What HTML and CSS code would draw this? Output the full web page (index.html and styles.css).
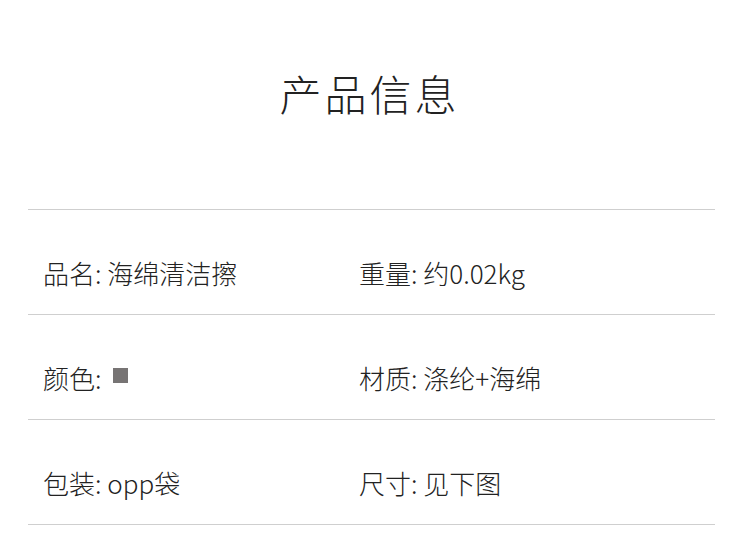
FILE: index.html
```html
<!DOCTYPE html>
<html lang="zh">
<head>
<meta charset="utf-8">
<link rel="stylesheet" href="styles.css">
</head>
<body>
<div class="page">
  <h1 class="title">产品信息</h1>
  <div class="table">
    <div class="row">
      <div class="cell">品名: 海绵清洁擦</div>
      <div class="cell">重量: 约0.02kg</div>
    </div>
    <div class="row">
      <div class="cell">颜色: <span class="swatch"></span></div>
      <div class="cell">材质: 涤纶+海绵</div>
    </div>
    <div class="row">
      <div class="cell">包装: opp袋</div>
      <div class="cell">尺寸: 见下图</div>
    </div>
  </div>
</div>
</body>
</html>
```

FILE: styles.css
```css
html, body {
  margin: 0;
  padding: 0;
  background: #fff;
}
.page {
  width: 750px;
  height: 560px;
  overflow: hidden;
  font-family: "Noto Sans CJK SC", "Noto Sans", sans-serif;
  color: #222;
}
.title {
  margin: 0;
  padding-top: 68px;
  padding-right: 11px;
  height: 209px;
  box-sizing: border-box;
  text-align: center;
  font-size: 42px;
  font-weight: 200;
  line-height: 50px;
  letter-spacing: 3px;
  color: #222;
}
.table {
  margin: 0 35px 0 28px;
  border-top: 1px solid #cfcfcf;
}
.row {
  display: grid;
  grid-template-columns: 316px 1fr;
  height: 104px;
  border-bottom: 1px solid #cfcfcf;
  box-sizing: content-box;
  align-items: end;
  padding-left: 15px;
}
.cell {
  font-size: 26px;
  font-weight: 300;
  line-height: 30px;
  padding-bottom: 26px;
  display: flex;
  align-items: center;
  white-space: pre;
}
.swatch {
  display: inline-block;
  width: 15px;
  height: 15px;
  background: #777474;
  margin-left: 6px;
  margin-top: -5px;
}
```
